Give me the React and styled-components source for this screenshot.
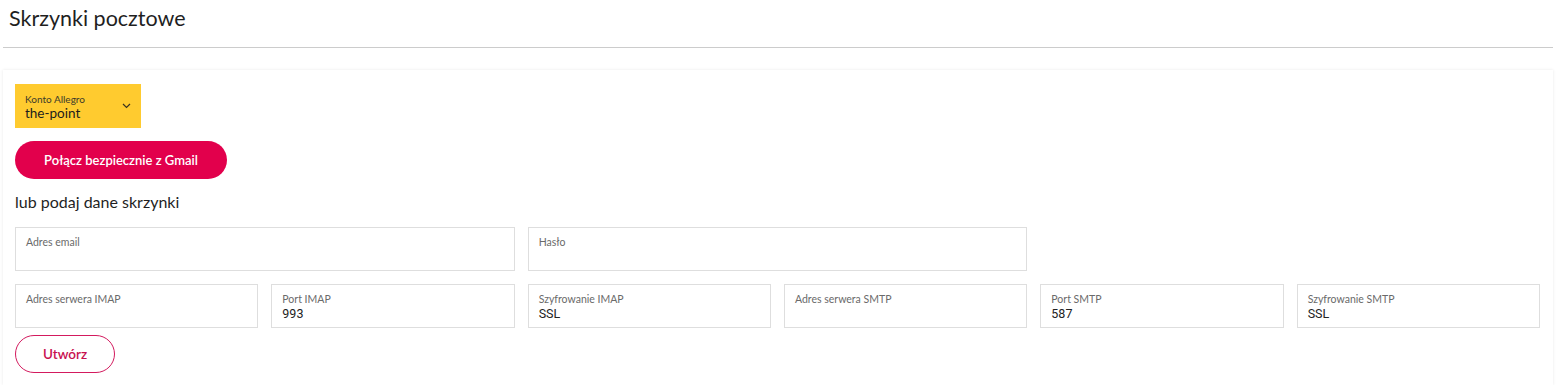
import styled, { createGlobalStyle } from 'styled-components'

const GlobalStyle = createGlobalStyle`
  body {
    margin: 0;
    background: #fff;
    font-family: Lato, "Open Sans", sans-serif;
    color: #222;
  }
`

const Page = styled.div`
  padding: 0 4px 0 3px;
`

const Header = styled.div`
  height: 48px;
  padding-left: 6px;
  border-bottom: 1px solid #cccccc;
  box-sizing: border-box;
  display: flex;
  align-items: flex-start;
`

const Title = styled.h1`
  margin: 6px 0 0;
  font-size: 21.5px;
  line-height: 24px;
  font-weight: 400;
  color: #1f1f1f;
`

const Card = styled.div`
  margin-top: 22px;
  padding: 14px 13px 12px 12px;
  background: #fff;
  box-shadow: 0 0 3px rgba(0, 0, 0, 0.09);
  display: flex;
  flex-direction: column;
  align-items: flex-start;
`

const Select = styled.div`
  width: 126px;
  height: 44px;
  box-sizing: border-box;
  padding: 0 10px;
  background: #ffcb2f;
  display: flex;
  align-items: center;
  justify-content: space-between;
`

const SelectText = styled.div`
  display: flex;
  flex-direction: column;
  padding-top: 2px;
`

const SelectLabel = styled.span`
  font-size: 10px;
  line-height: 12px;
  color: #3d3a2a;
`

const SelectValue = styled.span`
  font-size: 13.5px;
  line-height: 16px;
  color: #1c1c1c;
`

const PrimaryButton = styled.button`
  margin-top: 13px;
  width: 212px;
  height: 38px;
  border: none;
  border-radius: 19px;
  background: #e2004c;
  color: #fff;
  font-family: inherit;
  font-size: 13px;
  font-weight: 600;
`

const Subtitle = styled.div`
  margin: 12px 0 14px;
  font-size: 16px;
  line-height: 22px;
  color: #1f1f1f;
`

const Grid = styled.div`
  align-self: stretch;
  display: grid;
  grid-template-columns: repeat(6, 1fr);
  gap: 13px;
`

const Field = styled.div`
  grid-column: span ${p => p.$span || 1};
  height: 44px;
  box-sizing: border-box;
  padding: 8px 10px 0;
  border: 1px solid #dedede;
  display: flex;
  flex-direction: column;
`

const FieldLabel = styled.span`
  font-size: 10.5px;
  line-height: 12px;
  color: #6a6a6a;
`

const FieldValue = styled.span`
  font-family: Roboto, "Liberation Sans", sans-serif;
  font-size: 12.5px;
  line-height: 17px;
  color: #222;
`

const OutlineButton = styled.button`
  margin-top: 7px;
  width: 100px;
  height: 38px;
  border: 1px solid #d31a5e;
  border-radius: 19px;
  background: #fff;
  color: #c8104f;
  font-family: inherit;
  font-size: 13.5px;
  font-weight: 600;
`

const Chevron = () => (
  <svg width="9" height="6" viewBox="0 0 9 6" fill="none">
    <path d="M1 1l3.5 3.5L8 1" stroke="#3a3320" strokeWidth="1.2" />
  </svg>
)

const fields = [
  { label: 'Adres email', span: 2 },
  { label: 'Hasło', span: 2 },
  { empty: true, span: 2 },
  { label: 'Adres serwera IMAP' },
  { label: 'Port IMAP', value: '993' },
  { label: 'Szyfrowanie IMAP', value: 'SSL' },
  { label: 'Adres serwera SMTP' },
  { label: 'Port SMTP', value: '587' },
  { label: 'Szyfrowanie SMTP', value: 'SSL' },
]

function App() {
  return (
    <Page>
      <GlobalStyle />
      <Header>
        <Title>Skrzynki pocztowe</Title>
      </Header>
      <Card>
        <Select>
          <SelectText>
            <SelectLabel>Konto Allegro</SelectLabel>
            <SelectValue>the-point</SelectValue>
          </SelectText>
          <Chevron />
        </Select>
        <PrimaryButton>Połącz bezpiecznie z Gmail</PrimaryButton>
        <Subtitle>lub podaj dane skrzynki</Subtitle>
        <Grid>
          {fields.map((f, i) =>
            f.empty ? (
              <div key={i} style={{ gridColumn: 'span 2' }} />
            ) : (
              <Field key={i} $span={f.span}>
                <FieldLabel>{f.label}</FieldLabel>
                {f.value && <FieldValue>{f.value}</FieldValue>}
              </Field>
            )
          )}
        </Grid>
        <OutlineButton>Utwórz</OutlineButton>
      </Card>
    </Page>
  )
}

export default App
